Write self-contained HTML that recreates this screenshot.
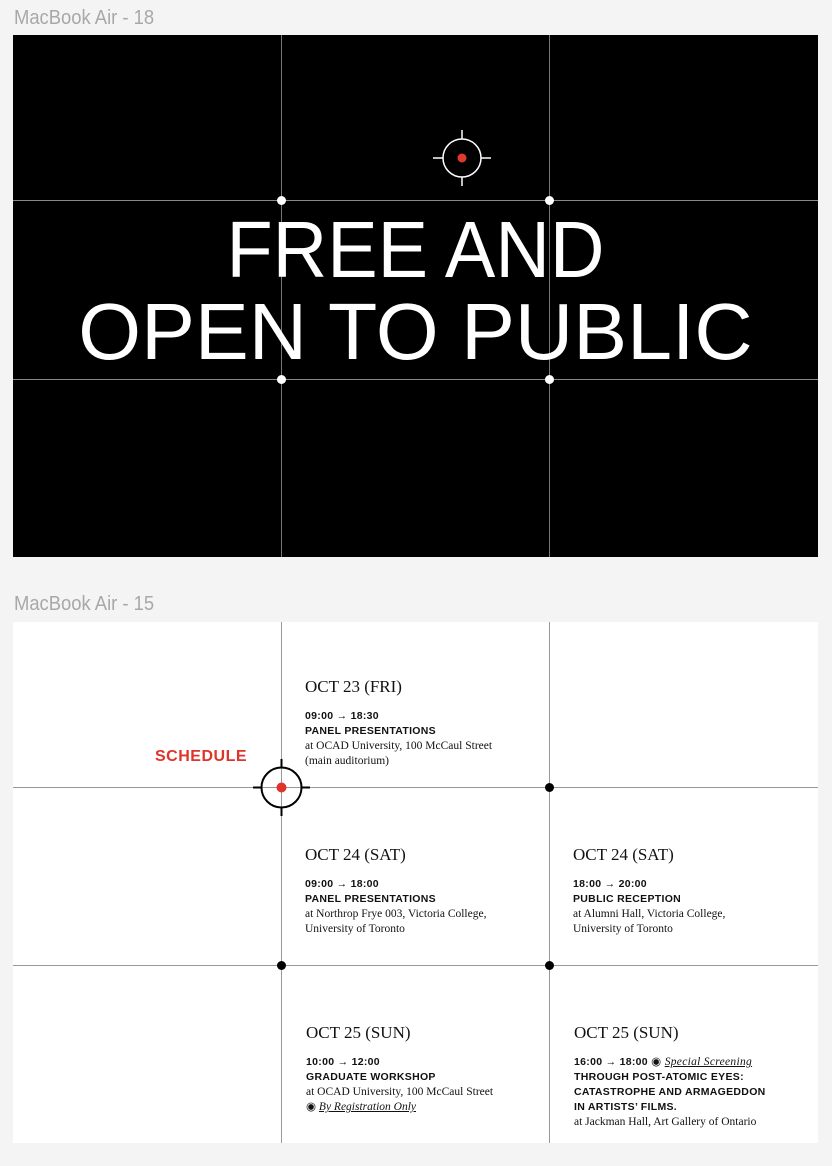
<!DOCTYPE html>
<html><head><meta charset="utf-8"><style>
*{margin:0;padding:0;box-sizing:border-box}
body{width:832px;height:1166px;background:#f4f4f4;position:relative;overflow:hidden;font-family:"Liberation Sans",sans-serif}
.lbl{position:absolute;left:14px;font-size:20px;color:#a8a8a8;transform:scaleX(0.92);transform-origin:left}
.f{position:absolute;left:13px;width:805px}
.vl,.hl{position:absolute}
.big{position:absolute;left:0;width:805px;text-align:center;color:#fff;font-size:80px;line-height:1;white-space:nowrap;transform-origin:center}
.blk{position:absolute;font-family:"Liberation Serif",serif;color:#111}
.d{font-size:17px;margin-bottom:12px}
.t{font-family:"Liberation Sans",sans-serif;font-weight:bold;font-size:10.5px;line-height:15px;letter-spacing:.3px}
.b{font-size:11.5px;line-height:15px}
.dot{position:absolute;width:9px;height:9px;border-radius:50%}
</style></head><body>
<div class="lbl" style="top:7px">MacBook Air - 18</div>
<div class="f" style="top:35px;height:522px;background:#000">
  <div class="vl" style="left:268px;top:0;width:1px;height:522px;background:#777"></div>
  <div class="vl" style="left:536px;top:0;width:1px;height:522px;background:#777"></div>
  <div class="hl" style="left:0;top:165px;width:805px;height:1px;background:#888"></div>
  <div class="hl" style="left:0;top:344px;width:805px;height:1px;background:#888"></div>
  <div class="big" style="top:175px;transform:scaleX(0.945)">FREE AND</div>
  <div class="big" style="top:257px;transform:scaleX(1.009)">OPEN TO PUBLIC</div>
  <div class="dot" style="left:264px;top:161px;background:#fff"></div>
  <div class="dot" style="left:532px;top:161px;background:#fff"></div>
  <div class="dot" style="left:264px;top:340px;background:#fff"></div>
  <div class="dot" style="left:532px;top:340px;background:#fff"></div>
  <svg style="position:absolute;left:419px;top:94px" width="60" height="60" viewBox="0 0 60 60">
    <circle cx="30" cy="29" r="19" fill="none" stroke="#fff" stroke-width="1.5"/>
    <circle cx="30" cy="29" r="4.5" fill="#e03a2e"/>
    <path d="M30 1v9M30 48v9M1 29h10M49 29h10" stroke="#fff" stroke-width="1.5"/>
  </svg>
</div>
<div class="lbl" style="top:593px">MacBook Air - 15</div>
<div class="f" style="top:622px;height:521px;background:#fff">
  <div class="vl" style="left:268px;top:0;width:1px;height:521px;background:#999"></div>
  <div class="vl" style="left:536px;top:0;width:1px;height:521px;background:#999"></div>
  <div class="hl" style="left:0;top:165px;width:805px;height:1px;background:#999"></div>
  <div class="hl" style="left:0;top:343px;width:805px;height:1px;background:#999"></div>
  <div class="dot" style="left:532px;top:161px;background:#000"></div>
  <div class="dot" style="left:264px;top:339px;background:#000"></div>
  <div class="dot" style="left:532px;top:339px;background:#000"></div>
  <div style="position:absolute;left:142px;top:126px;color:#e0342a;font-weight:bold;font-size:16px;letter-spacing:.5px">SCHEDULE</div>
  <svg style="position:absolute;left:240px;top:137px" width="58" height="58" viewBox="0 0 58 58">
    <circle cx="28.5" cy="28.5" r="20" fill="none" stroke="#000" stroke-width="2"/>
    <circle cx="28.5" cy="28.5" r="5" fill="#e0342a"/>
    <path d="M28.5 0v9M28.5 48v9M0 28.5h9M48 28.5h9" stroke="#000" stroke-width="2"/>
  </svg>
  <div class="blk" style="left:292px;top:55px"><div class="d">OCT 23 (FRI)</div><div class="t">09:00 → 18:30<br>PANEL PRESENTATIONS</div><div class="b">at OCAD University, 100 McCaul Street<br>(main auditorium)</div></div>
  <div class="blk" style="left:292px;top:223px"><div class="d">OCT 24 (SAT)</div><div class="t">09:00 → 18:00<br>PANEL PRESENTATIONS</div><div class="b">at Northrop Frye 003, Victoria College,<br>University of Toronto</div></div>
  <div class="blk" style="left:560px;top:223px"><div class="d">OCT 24 (SAT)</div><div class="t">18:00 → 20:00<br>PUBLIC RECEPTION</div><div class="b">at Alumni Hall, Victoria College,<br>University of Toronto</div></div>
  <div class="blk" style="left:293px;top:401px"><div class="d">OCT 25 (SUN)</div><div class="t">10:00 → 12:00<br>GRADUATE WORKSHOP</div><div class="b">at OCAD University, 100 McCaul Street<br>◉ <i><u>By Registration Only</u></i></div></div>
  <div class="blk" style="left:561px;top:401px"><div class="d">OCT 25 (SUN)</div><div class="t">16:00 → 18:00 <span style="font-family:'Liberation Serif',serif;font-weight:normal;font-size:11.5px">◉ <i><u>Special Screening</u></i></span><br>THROUGH POST-ATOMIC EYES:<br>CATASTROPHE AND ARMAGEDDON<br>IN ARTISTS’ FILMS.</div><div class="b">at Jackman Hall, Art Gallery of Ontario</div></div>
</div>
</body></html>
